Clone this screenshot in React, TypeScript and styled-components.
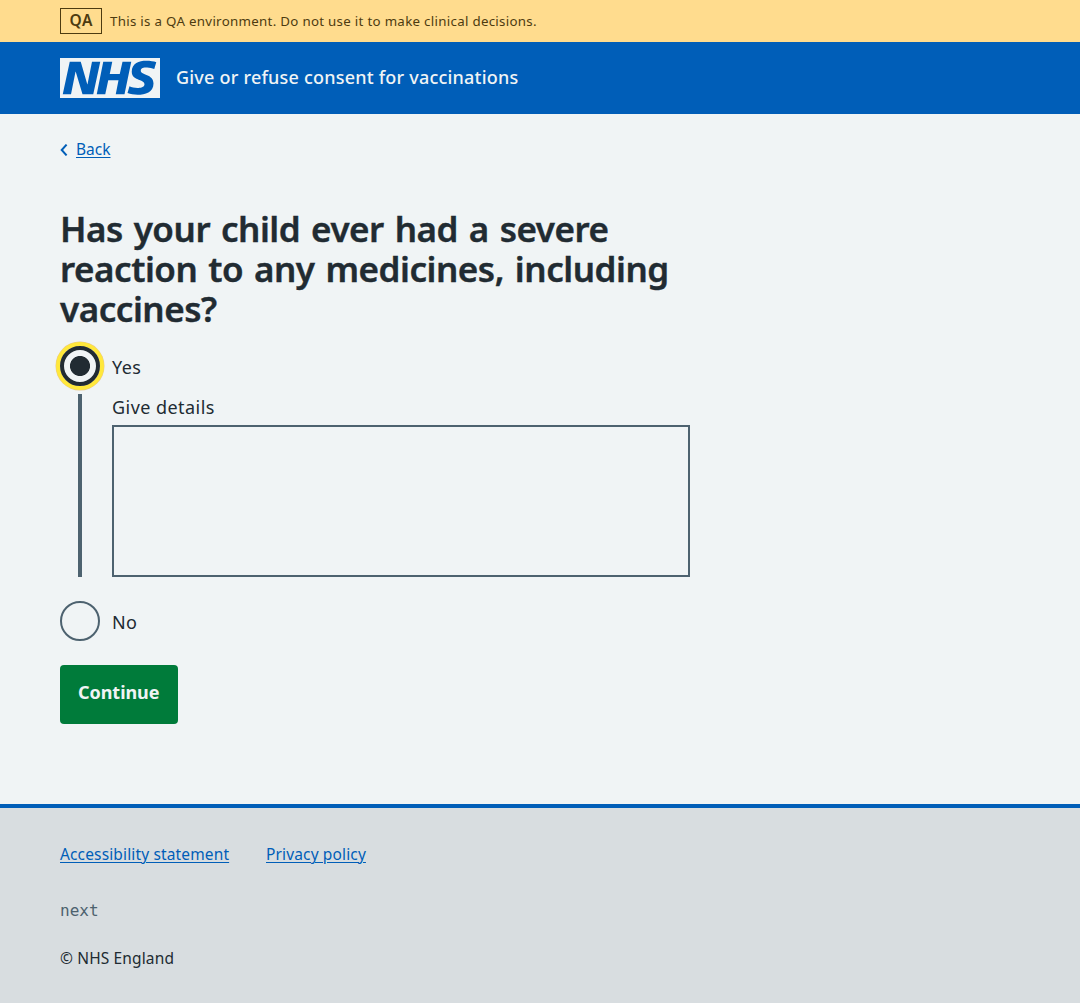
import React, { useState } from "react";
import styled, { createGlobalStyle } from "styled-components";

const GlobalStyle = createGlobalStyle`
  *, *::before, *::after { box-sizing: border-box; }
  body {
    margin: 0;
    background: #d8dde0;
    color: #212b32;
    font-family: "Noto Sans", "Open Sans", sans-serif;
    font-size: 18px;
  }
`;

const Page = styled.div`
  min-height: 1003px;
  display: flex;
  flex-direction: column;
  background: #f0f4f5;
`;

const Container = styled.div`
  width: 960px;
  margin: 0 auto;
  display: flex;
  align-items: center;
`;

const Banner = styled.div`
  height: 42px;
  display: flex;
  background: #ffdc8e;
  color: #4d3b10;
`;

const Tag = styled.strong`
  width: 42px;
  height: 26px;
  margin-right: 8px;
  border: 1px solid #4d3b10;
  font-size: 15.5px;
  font-weight: 600;
  line-height: 23px;
  letter-spacing: 0.5px;
  text-indent: 0.5px;
  text-align: center;
`;

const Text = styled.span<{ $size: number; $spacing?: number }>`
  font-size: ${(p) => p.$size}px;
  letter-spacing: ${(p) => p.$spacing ?? 0}px;
  line-height: 24px;
  white-space: nowrap;
`;

const Header = styled.header`
  height: 72px;
  display: flex;
  background: #005eb8;
  color: #f0f4f5;
`;

const Logo = styled.svg`
  width: 100px;
  height: 40px;
  margin-right: 16px;
`;

const ServiceName = styled(Text)`
  font-weight: 500;
  padding-bottom: 2px;
`;

const Main = styled.main`
  width: 960px;
  height: 690px;
  margin: 0 auto;
  padding-top: 23px;
`;

const BackLink = styled.a`
  display: flex;
  align-items: center;
  height: 24px;
  color: #005eb8;
  text-decoration: none;
`;

const Chevron = styled.svg`
  width: 8px;
  height: 12px;
  margin-right: 8px;
  margin-top: 2px;
`;

const LinkText = styled(Text)`
  color: #005eb8;
  text-decoration: underline;
  text-decoration-thickness: 1px;
  text-underline-offset: 2px;
`;

const Heading = styled.h1`
  width: 640px;
  margin: 48px 0 17px;
  font-size: 35px;
  font-weight: 600;
  line-height: 40px;
  letter-spacing: -0.46px;
  word-spacing: 2.2px;
  -webkit-text-stroke: 0.4px #212b32;
`;

const RadioRow = styled.label`
  display: flex;
  align-items: center;
  height: 40px;
  cursor: pointer;
`;

const RadioInput = styled.input`
  appearance: none;
  flex: none;
  width: 40px;
  height: 40px;
  margin: 0 12px 0 0;
  border: 2px solid #4d626f;
  border-radius: 50%;
  outline: none;

  &:checked {
    border: 4px solid #212b32;
    box-shadow: 0 0 0 4px #ffe83b, 0 0 0 4.5px #e8c98a;
    background: radial-gradient(circle, #212b32 9.6px, transparent 10.4px);
  }
`;

const RadioText = styled(Text)`
  padding-top: 2px;
`;

const Conditional = styled.div`
  width: 612px;
  height: 183px;
  margin: 8px 0 24px 18px;
  padding-left: 30px;
  border-left: 4px solid #4d626f;
  display: flex;
  flex-direction: column;
`;

const DetailsLabel = styled.label`
  height: 31px;
  padding-top: 1px;
`;

const Details = styled.textarea`
  width: 578px;
  height: 152px;
  padding: 4px;
  border: 2px solid #4d626f;
  border-radius: 0;
  background: transparent;
  resize: none;
  outline: none;
  font: inherit;
`;

const Button = styled.button`
  width: 117.5px;
  height: 55px;
  margin-top: 24px;
  padding: 0 0 2px;
  border: 0;
  border-radius: 4px;
  background: #007b3a;
  box-shadow: 0 4px 0 #007b3a;
  color: #f0f4f5;
  font-family: inherit;
  font-weight: 700;
`;

const Footer = styled.footer`
  flex: 1;
  border-top: 4px solid #005eb8;
  background: #d8dde0;
  padding-top: 34px;
`;

const FooterInner = styled.div`
  width: 960px;
  margin: 0 auto;
`;

const FooterLinks = styled.nav`
  display: grid;
  grid-template-columns: 206px auto;
  height: 24px;
  margin-bottom: 33px;
`;

const FooterLink = styled.a`
  display: flex;
  align-items: flex-start;
  text-decoration: none;
`;

const Version = styled.div`
  height: 24px;
  margin-bottom: 23px;
  color: #4d626f;
  font-family: "DejaVu Sans Mono", monospace;
  font-size: 16px;
  line-height: 24px;
`;

const Copyright = styled(Text)`
  display: block;
`;

export default function App() {
  const [answer, setAnswer] = useState("yes");
  return (
    <Page>
      <GlobalStyle />
      <Banner>
        <Container>
          <Tag>QA</Tag>
          <Text $size={13.3} $spacing={0.3}>This is a QA environment. Do not use it to make clinical decisions.</Text>
        </Container>
      </Banner>
      <Header>
        <Container>
          <Logo viewBox="0 0 200 80" role="img" aria-label="NHS">
            <path
              fill="currentColor"
              d="M200 0v80H0V0h200Zm-27.5 5.5c-14.5 0-29 5-29 22 0 10.2 7.7 13.5 14.7 16.3l.7.3c5.4 2 10.1 3.9 10.1 8.4 0 6.5-8.5 7.5-14 7.5s-12.5-1.5-16-3.5L135 70c5.5 2 13.5 3.5 20 3.5 15.5 0 32-4.5 32-22.5 0-19.5-25.5-16.5-25.5-25.5 0-5.5 5.5-6.5 12.5-6.5a35 35 0 0 1 14.5 3l4-13.5c-4.5-2-12-3-20-3Zm-131 2h-22l-14 65H22l9-45h.5l13.5 45h21.5l14-65H64l-9 45h-.5l-13-45Zm63 0h-18l-13 65h17l6-28H117l-5.5 28H129l13.5-65H125L119.5 32h-20l5-24.5Z"
            />
          </Logo>
          <ServiceName $size={18} $spacing={0.21}>Give or refuse consent for vaccinations</ServiceName>
        </Container>
      </Header>
      <Main>
        <BackLink href="#">
          <Chevron viewBox="0 0 8 12" fill="none" stroke="#005eb8" strokeWidth="2">
            <path d="M6.6 0.6 1.7 6l4.9 5.4" />
          </Chevron>
          <LinkText $size={15.5}>Back</LinkText>
        </BackLink>
        <Heading>Has your child ever had a severe reaction to any medicines, including vaccines?</Heading>
        <RadioRow>
          <RadioInput type="radio" name="reaction" checked={answer === "yes"} onChange={() => setAnswer("yes")} />
          <RadioText $size={18} $spacing={0.4}>Yes</RadioText>
        </RadioRow>
        <Conditional>
          <DetailsLabel htmlFor="details">
            <Text $size={18} $spacing={0.45}>Give details</Text>
          </DetailsLabel>
          <Details id="details" />
        </Conditional>
        <RadioRow>
          <RadioInput type="radio" name="reaction" checked={answer === "no"} onChange={() => setAnswer("no")} />
          <RadioText $size={18} $spacing={0.4}>No</RadioText>
        </RadioRow>
        <Button>
          <Text $size={18} $spacing={-0.05}>Continue</Text>
        </Button>
      </Main>
      <Footer>
        <FooterInner>
          <FooterLinks>
            <FooterLink href="#"><LinkText $size={15.5} $spacing={0.14}>Accessibility statement</LinkText></FooterLink>
            <FooterLink href="#"><LinkText $size={15.5} $spacing={0.14}>Privacy policy</LinkText></FooterLink>
          </FooterLinks>
          <Version>next</Version>
          <Copyright $size={15.5} $spacing={0.14}>© NHS England</Copyright>
        </FooterInner>
      </Footer>
    </Page>
  );
}
